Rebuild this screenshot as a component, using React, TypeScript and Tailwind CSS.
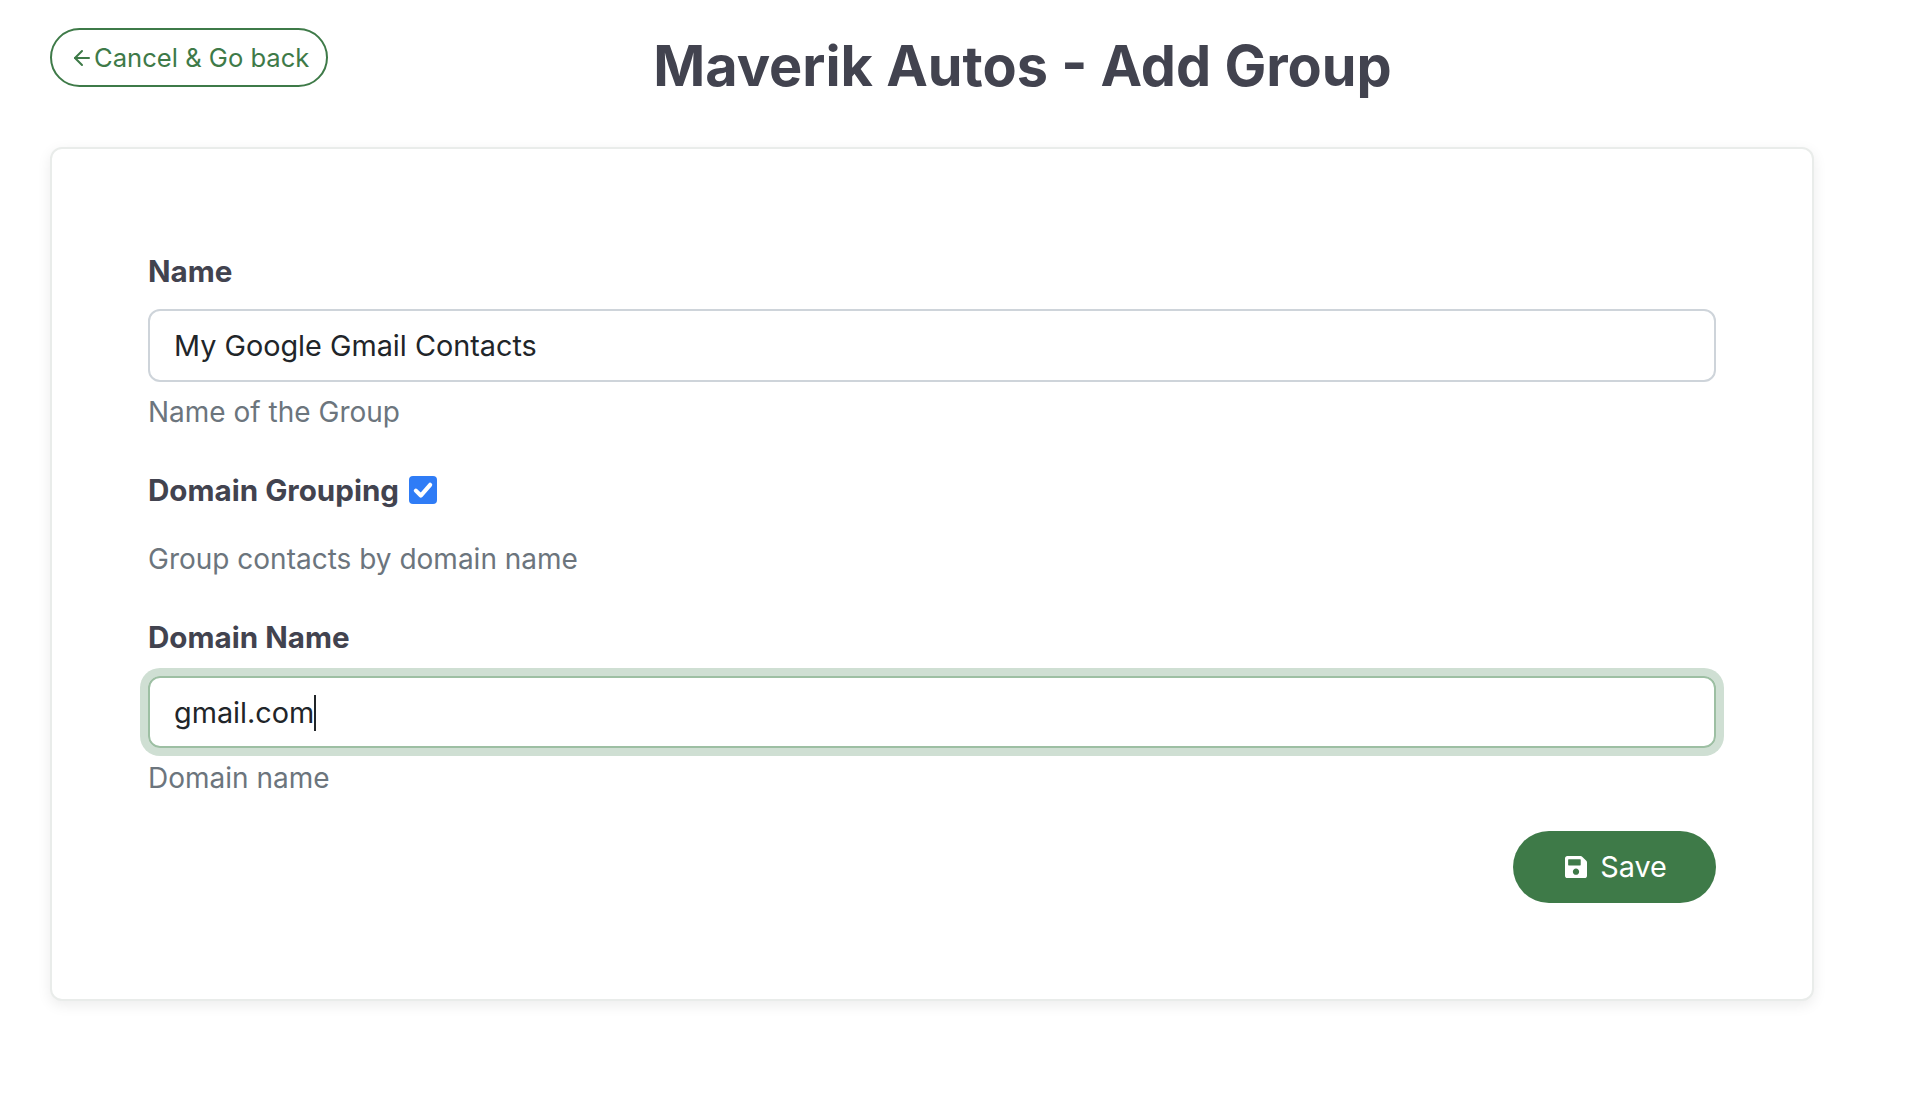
import React from 'react';
import { ArrowLeft } from 'lucide-react';

const SaveIcon: React.FC = () => (
    <svg viewBox="0 0 448 512" className="w-[22px] h-[26px]" fill="currentColor">
        <path d="M433.9 129.9l-83.9-83.9A48 48 0 0 0 316.1 32H48C21.5 32 0 53.5 0 80v352c0 26.5 21.5 48 48 48h352c26.5 0 48-21.5 48-48V163.9a48 48 0 0 0-14.1-34zM224 416c-35.3 0-64-28.7-64-64 0-35.3 28.7-64 64-64s64 28.7 64 64c0 35.3-28.7 64-64 64zm96-304.5V212c0 6.6-5.4 12-12 12H76c-6.6 0-12-5.4-12-12V108c0-6.6 5.4-12 12-12h228.5c3.2 0 6.2 1.3 8.5 3.5l3.5 3.5c2.3 2.3 3.5 5.3 3.5 8.5z" />
    </svg>
);

const App: React.FC = () => {
    return (
        <div className="min-h-[1104px] bg-white font-['Inter',sans-serif]">
            <div className="flex items-start pl-[50px] pr-[209px] pt-[28px]">
                <a className="flex items-center h-[59px] w-[278px] pl-[18px] pt-[1px] border-2 border-[#3e7a48] rounded-full text-[#3e7a48] text-[25.6px]">
                    <ArrowLeft className="w-[24px] h-[24px]" strokeWidth={2} />
                    Cancel &amp; Go back
                </a>
                <h1 className="flex-1 text-center text-[55.8px] leading-[76px] font-bold text-[#42434f]">Maverik Autos - Add Group</h1>
            </div>
            <div className="ml-[50px] mt-[43px] w-[1764px] h-[854px] bg-white border-2 border-[#e9ecea] rounded-[12px] shadow-[0_4px_14px_rgba(0,0,0,0.08)] pt-[104px] px-[96px]">
                <label className="block text-[29.6px] leading-[36px] font-bold text-[#42434f]">Name</label>
                <input
                    readOnly
                    value="My Google Gmail Contacts"
                    className="block w-full h-[73px] mt-[20px] px-[24px] border-2 border-[#ced4da] rounded-[12px] text-[28.8px] text-[#212529] outline-none"
                />
                <p className="mt-[12px] text-[28px] leading-[36px] text-[#6c757d]">Name of the Group</p>
                <div className="flex items-center gap-[10px] mt-[42px]">
                    <label className="text-[29.6px] leading-[36px] font-bold text-[#42434f]">Domain Grouping</label>
                    <span className="flex items-center justify-center w-[28px] h-[28px] rounded-[4px] bg-[#2f7cf6]">
                        <svg viewBox="0 0 20 20" className="w-[26px] h-[26px]" fill="none" stroke="white" strokeWidth="3.2" strokeLinecap="round" strokeLinejoin="round">
                            <path d="M4.5 10.5l3.8 3.8 7.2-8.3" />
                        </svg>
                    </span>
                </div>
                <p className="mt-[33px] text-[28px] leading-[36px] text-[#6c757d]">Group contacts by domain name</p>
                <label className="block mt-[42px] text-[29.6px] leading-[36px] font-bold text-[#42434f]">Domain Name</label>
                <div className="flex items-center w-full h-[72px] mt-[21px] px-[24px] pt-[1px] border-2 border-[#9dbfa3] rounded-[12px] ring-[8px] ring-[#cfdfd3] text-[28.8px] text-[#212529]">
                    gmail.com<span className="inline-block w-[2px] h-[36px] bg-[#212529]" />
                </div>
                <p className="mt-[12px] text-[28px] leading-[36px] text-[#6c757d]">Domain name</p>
                <div className="flex justify-end mt-[35px]">
                    <button className="flex items-center justify-center gap-[13px] w-[203px] h-[72px] pl-[3px] rounded-full bg-[#3e7a48] text-white text-[28.8px]">
                        <SaveIcon />
                        Save
                    </button>
                </div>
            </div>
        </div>
    );
};

export default App;
